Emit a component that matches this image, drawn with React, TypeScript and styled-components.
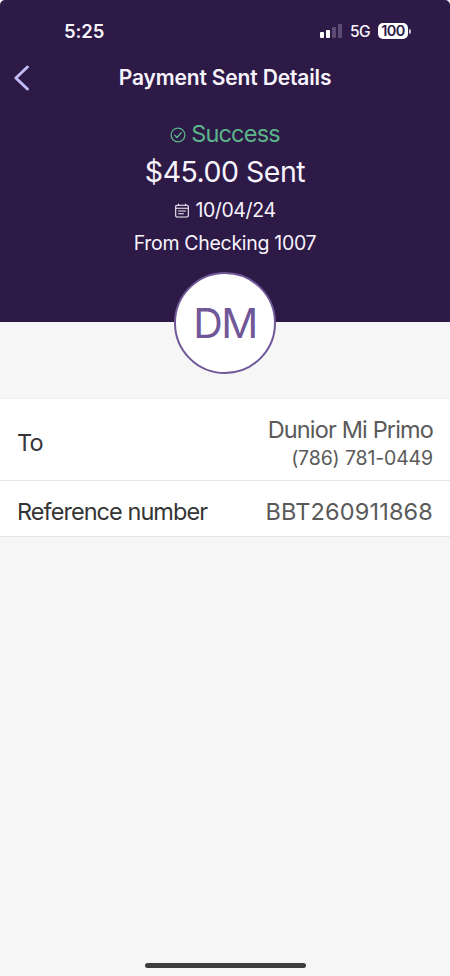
import styled, { createGlobalStyle } from 'styled-components'

const rows = [
  {
    label: 'To',
    value: 'Dunior Mi Primo',
    sub: '(786) 781-0449',
    height: 82,
    spacing: -0.85
  },
  {
    label: 'Reference number',
    value: 'BBT260911868',
    height: 56,
    spacing: 0.15
  }
]

const StatusBar = () => (
  <StyledStatusBar>
    <StyledTime>5:25</StyledTime>
    <StyledSignal>
      <StyledBar $height={6} />
      <StyledBar $height={8} />
      <StyledBar $height={11} $dim />
      <StyledBar $height={14} $dim />
    </StyledSignal>
    <StyledNetwork>5G</StyledNetwork>
    <StyledBattery>100</StyledBattery>
    <StyledBatteryTip />
  </StyledStatusBar>
)

const CheckIcon = () => (
  <svg width="16" height="16" viewBox="0 0 16 16" fill="none" stroke="currentColor" strokeWidth="1.3">
    <circle cx="8" cy="8" r="6.9" />
    <path d="M4.8 8.3 7 10.5l4.2-4.7" strokeLinecap="round" strokeLinejoin="round" />
  </svg>
)

const CalendarIcon = () => (
  <svg width="14" height="15" viewBox="0 0 14 15" fill="none" stroke="currentColor" strokeWidth="1.1">
    <rect x="0.7" y="2.2" width="12.6" height="11.8" rx="1.2" />
    <path d="M0.7 5.2h12.6M3.5 0.7v2.2M10.5 0.7v2.2M3.2 8h7.6M3.2 10.8h5.6" />
  </svg>
)

const App = () => (
  <StyledScreen>
    <GlobalStyle />
    <StyledHeader>
      <StatusBar />
      <StyledNav>
        <StyledBack aria-label="Back">
          <svg width="16" height="26" viewBox="0 0 16 26" fill="none">
            <path d="M13.4 2 1.9 13l11.5 11" stroke="#c4bdf5" strokeWidth="2.9" strokeLinecap="round" strokeLinejoin="round" />
          </svg>
        </StyledBack>
        <StyledTitle>Payment Sent Details</StyledTitle>
      </StyledNav>
      <StyledSummary>
        <StyledStatus>
          <CheckIcon />
          <span>Success</span>
        </StyledStatus>
        <StyledAmount>$45.00 Sent</StyledAmount>
        <StyledDate>
          <CalendarIcon />
          <span>10/04/24</span>
        </StyledDate>
        <StyledAccount>From Checking 1007</StyledAccount>
      </StyledSummary>
    </StyledHeader>
    <StyledAvatar>
      <span>DM</span>
    </StyledAvatar>
    <StyledList>
      {rows.map((row) => (
        <StyledRow key={row.label} $height={row.height}>
          <StyledLabel>{row.label}</StyledLabel>
          <StyledValues>
            <StyledValue $spacing={row.spacing}>{row.value}</StyledValue>
            {row.sub && <StyledSub>{row.sub}</StyledSub>}
          </StyledValues>
        </StyledRow>
      ))}
    </StyledList>
    <StyledHomeIndicator />
  </StyledScreen>
)

export default App

const GlobalStyle = createGlobalStyle`
  * {
    box-sizing: border-box;
  }

  body {
    margin: 0;
    background-color: #fff;
    font-family: Inter, 'Liberation Sans', sans-serif;
  }
`

const StyledScreen = styled.main`
  display: flex;
  flex-direction: column;
  align-items: center;
  height: 976px;
  background-color: #f6f6f6;
  border-radius: 5px 5px 0 0;
  overflow: hidden;
  white-space: nowrap;
`

const StyledHeader = styled.header`
  flex: none;
  width: 100%;
  height: 322px;
  background-color: #2d1a47;
  color: #f8f4fc;
`

const StyledStatusBar = styled.div`
  display: flex;
  align-items: center;
  height: 62px;
  padding: 0 39px 0 64px;
`

const StyledTime = styled.span`
  margin-right: auto;
  font-size: 18.5px;
  font-weight: 600;
  letter-spacing: -0.1px;
`

const StyledSignal = styled.div`
  display: flex;
  align-items: flex-end;
  gap: 2px;
  margin-right: 8px;
`

const StyledBar = styled.i<{ $height: number; $dim?: boolean }>`
  width: 4px;
  height: ${({ $height }) => $height}px;
  border-radius: 1px;
  background-color: ${({ $dim }) => ($dim ? '#5c4c73' : '#fff')};
`

const StyledNetwork = styled.span`
  margin-right: 8px;
  font-size: 15.5px;
  font-weight: 500;
  letter-spacing: -0.6px;
`

const StyledBattery = styled.span`
  width: 30px;
  height: 16px;
  border-radius: 5px;
  background-color: #fff;
  color: #2d1a47;
  font-size: 14.5px;
  font-weight: 600;
  line-height: 16px;
  letter-spacing: -0.6px;
  text-align: center;
`

const StyledBatteryTip = styled.i`
  width: 2px;
  height: 5px;
  margin-left: 1px;
  border-radius: 0 2px 2px 0;
  background-color: #c9c2d3;
`

const StyledNav = styled.nav`
  display: grid;
  grid-template-columns: 44px 1fr 44px;
  align-items: center;
  height: 31px;
`

const StyledBack = styled.button`
  display: flex;
  padding: 0 0 0 14px;
  border: 0;
  background: none;
`

const StyledTitle = styled.h1`
  margin: 0;
  font-size: 21px;
  font-weight: 600;
  letter-spacing: -0.15px;
  text-align: center;
`

const StyledSummary = styled.div`
  display: flex;
  flex-direction: column;
  align-items: center;
  padding-top: 23px;
`

const StyledStatus = styled.div`
  display: flex;
  align-items: center;
  gap: 5px;
  height: 36px;
  color: #5bb58a;
  font-size: 23.5px;
  letter-spacing: -0.8px;

  svg {
    position: relative;
    top: 1px;
  }

  span {
    margin-top: -1px;
  }
`

const StyledAmount = styled.div`
  font-size: 28.5px;
  line-height: 40px;
  letter-spacing: -0.5px;
`

const StyledDate = styled.div`
  display: flex;
  align-items: center;
  gap: 6px;
  height: 36px;
  padding-left: 1px;
  font-size: 19.5px;
  letter-spacing: -0.4px;
`

const StyledAccount = styled.div`
  font-size: 19.5px;
  line-height: 31px;
  letter-spacing: -0.3px;
`

const StyledAvatar = styled.div`
  display: flex;
  flex: none;
  align-items: center;
  justify-content: center;
  width: 102px;
  height: 102px;
  margin-top: -50px;
  border: 2px solid #705798;
  border-radius: 50%;
  background-color: #fff;
  color: #705798;
  font-size: 41px;
  letter-spacing: -1.5px;
`

const StyledList = styled.section`
  width: 100%;
  margin-top: 24px;
  border-top: 1px solid #ececec;
  background-color: #fff;
`

const StyledRow = styled.div<{ $height: number }>`
  display: flex;
  align-items: center;
  justify-content: space-between;
  height: ${({ $height }) => $height}px;
  padding: 6px 17px 0;
  border-bottom: 1px solid #e6e6e6;
`

const StyledLabel = styled.span`
  color: #353535;
  font-size: 23.5px;
  letter-spacing: -0.95px;
`

const StyledValues = styled.div`
  display: flex;
  flex-direction: column;
  align-items: flex-end;
  color: #5a5a5a;
`

const StyledValue = styled.span<{ $spacing: number }>`
  font-size: 23.5px;
  line-height: 30px;
  letter-spacing: ${({ $spacing }) => $spacing}px;
`

const StyledSub = styled.span`
  font-size: 19.5px;
  line-height: 26px;
  letter-spacing: -0.15px;
`

const StyledHomeIndicator = styled.div`
  flex: none;
  width: 161px;
  height: 5px;
  margin: auto 0 8px;
  border-radius: 3px;
  background-color: #3e3e3e;
`
